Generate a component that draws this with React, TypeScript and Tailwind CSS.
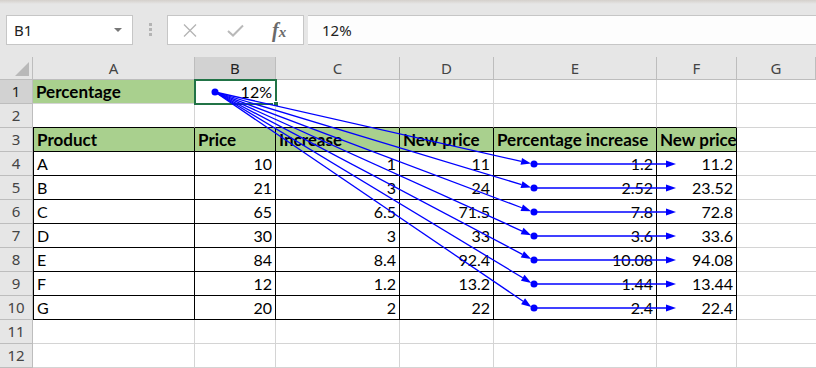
import React from "react";

const cols = ["A", "B", "C", "D", "E", "F", "G"];

const rows: [string, string, string, string, string, string][] = [
  ["A", "10", "1", "11", "1.2", "11.2"],
  ["B", "21", "3", "24", "2.52", "23.52"],
  ["C", "65", "6.5", "71.5", "7.8", "72.8"],
  ["D", "30", "3", "33", "3.6", "33.6"],
  ["E", "84", "8.4", "92.4", "10.08", "94.08"],
  ["F", "12", "1.2", "13.2", "1.44", "13.44"],
  ["G", "20", "2", "22", "2.4", "22.4"],
];

const headers = ["Product", "Price", "Increase", "New price", "Percentage increase", "New price"];

const cellFont = { fontFamily: "Lato, 'Open Sans', sans-serif" };
const uiFont = { fontFamily: "'Noto Sans', 'Open Sans', sans-serif" };

function Arrow({ x1, y1, x2, y2 }: { x1: number; y1: number; x2: number; y2: number }) {
  const dx = x2 - x1;
  const dy = y2 - y1;
  const len = Math.hypot(dx, dy);
  const ux = dx / len;
  const uy = dy / len;
  const tx = x2 - ux * 2;
  const ty = y2 - uy * 2;
  const bx = tx - ux * 10;
  const by = ty - uy * 10;
  const px = -uy * 3.5;
  const py = ux * 3.5;
  return (
    <g>
      <line x1={x1} y1={y1} x2={bx} y2={by} stroke="#0000ff" strokeWidth={1.3} />
      <polygon points={`${tx},${ty} ${bx + px},${by + py} ${bx - px},${by - py}`} fill="#0000ff" />
    </g>
  );
}

function Cell({
  children,
  className = "",
}: {
  children?: React.ReactNode;
  className?: string;
}) {
  return (
    <div
      className={`flex items-end pb-[1px] px-[3px] text-[16px] leading-[20px] text-black border-r border-b whitespace-nowrap ${className}`}
    >
      {children}
    </div>
  );
}

function RowHead({ n, active = false }: { n: number; active?: boolean }) {
  return (
    <div
      className={`flex items-center justify-center border-r border-b border-[#bdbdbd] text-[15px] ${active ? "bg-[#d2d2d2] text-[#222]" : "bg-[#e6e6e6] text-[#444]"}`}
      style={uiFont}
    >
      {n}
    </div>
  );
}

export default function App() {
  const ys = [164, 188, 212, 236, 260, 284, 308];

  return (
    <div className="relative w-[816px] h-[368px] overflow-hidden bg-white">
      {/* Formula bar */}
      <div className="relative h-[57px] bg-[#e6e6e6]" style={uiFont}>
        <div className="h-[4px] bg-gradient-to-b from-[#d4d0cb] to-[#e6e6e6]" />
        <div className="flex items-start pt-[11px]">
          <div className="ml-[6px] w-[127px] h-[30px] bg-white border border-[#c6c6c6] flex items-center justify-between pl-[7px] pr-[10px]">
            <span className="text-[15px] text-[#222]">B1</span>
            <span className="w-0 h-0 border-l-[4px] border-r-[4px] border-t-[4px] border-l-transparent border-r-transparent border-t-[#777]" />
          </div>
          <div className="ml-[16px] mt-[8px] flex flex-col gap-[2px]">
            <span className="w-[3px] h-[3px] bg-[#b4b4b4]" />
            <span className="w-[3px] h-[3px] bg-[#b4b4b4]" />
            <span className="w-[3px] h-[3px] bg-[#b4b4b4]" />
          </div>
          <div className="ml-[15px] w-[137px] h-[30px] bg-white border border-[#c6c6c6] flex items-center">
            <svg width="14" height="13" viewBox="0 0 14 13" className="ml-[15px]">
              <path d="M1 0.5 L13 12.5 M13 0.5 L1 12.5" stroke="#b4b4b4" strokeWidth="1.3" />
            </svg>
            <svg width="17" height="13" viewBox="0 0 17 13" className="ml-[30px]">
              <path d="M1 7 L6 11.5 L16 1.5" stroke="#b9b9b9" strokeWidth="2" fill="none" />
            </svg>
            <span
              className="ml-[28px] text-[20px] leading-none font-bold italic text-[#6a6a6a]"
              style={{ fontFamily: "'Liberation Serif', serif" }}
            >
              f<span className="text-[15px]">x</span>
            </span>
          </div>
          <div className="ml-[4px] flex-1 h-[30px] bg-[#fdfdfd] border-y border-[#c6c6c6] flex items-center pl-[14px]">
            <span className="text-[15px] text-[#222]">12%</span>
          </div>
        </div>
      </div>

      {/* Sheet grid */}
      <div
        className="grid grid-cols-[33px_162px_81px_124px_94px_163px_80px_1fr] grid-rows-[23px_repeat(12,24px)]"
        style={cellFont}
      >
        {/* column headers */}
        <div className="relative bg-[#e6e6e6] border-r border-b border-[#bdbdbd]">
          <span className="absolute right-[3px] bottom-[3px] w-0 h-0 border-l-[14px] border-b-[14px] border-l-transparent border-b-[#b9b9b9]" />
        </div>
        {cols.map((c) => (
          <div
            key={c}
            className={`flex items-center justify-center border-r border-b border-[#bdbdbd] text-[15px] ${c === "B" ? "bg-[#d2d2d2] text-[#222]" : "bg-[#e6e6e6] text-[#444]"}`}
            style={uiFont}
          >
            {c}
          </div>
        ))}

        {/* row 1 */}
        <RowHead n={1} active />
        <Cell className="bg-[#a9d08e] border-[#d4d4d4] font-bold text-[17px]">Percentage</Cell>
        <Cell className="justify-end border-[#d4d4d4]">12%</Cell>
        <Cell className="border-[#d4d4d4]" />
        <Cell className="border-[#d4d4d4]" />
        <Cell className="border-[#d4d4d4]" />
        <Cell className="border-[#d4d4d4]" />
        <Cell className="border-[#d4d4d4] border-r-0" />

        {/* row 2 */}
        <RowHead n={2} />
        {[0, 1, 2, 3, 4, 5].map((i) => (
          <Cell key={i} className="border-r-[#d4d4d4] border-b-black" />
        ))}
        <Cell className="border-[#d4d4d4] border-r-0" />

        {/* row 3 headers */}
        <RowHead n={3} />
        {headers.map((h, i) => (
          <Cell key={i} className={`bg-[#a9d08e] border-black font-bold text-[17px] ${i === 0 ? "border-l" : ""}`}>
            {h}
          </Cell>
        ))}
        <Cell className="border-[#d4d4d4] border-r-0" />

        {/* data rows */}
        {rows.map((r, ri) => (
          <React.Fragment key={ri}>
            <RowHead n={ri + 4} />
            {r.map((v, i) => (
              <Cell key={i} className={`border-black ${i === 0 ? "border-l" : "justify-end"}`}>
                {v}
              </Cell>
            ))}
            <Cell className="border-[#d4d4d4] border-r-0" />
          </React.Fragment>
        ))}

        {/* rows 11-12 */}
        {[11, 12].map((n) => (
          <React.Fragment key={n}>
            <RowHead n={n} />
            {[0, 1, 2, 3, 4, 5].map((i) => (
              <Cell key={i} className="border-[#d4d4d4]" />
            ))}
            <Cell className="border-[#d4d4d4] border-r-0" />
          </React.Fragment>
        ))}
      </div>

      {/* selected cell B1 */}
      <div className="absolute left-[194px] top-[79px] w-[83px] h-[26px] border-2 border-[#217346] pointer-events-none" />
      <div className="absolute left-[273px] top-[101px] w-[6px] h-[6px] bg-[#217346] border border-white pointer-events-none" />

      {/* trace arrows */}
      <svg className="absolute left-0 top-0 pointer-events-none" width="816" height="368">
        <circle cx={215} cy={92} r={3.5} fill="#0000ff" />
        {ys.map((y) => (
          <g key={y}>
            <Arrow x1={215} y1={92} x2={533} y2={y} />
            <circle cx={534} cy={y} r={3.5} fill="#0000ff" />
            <Arrow x1={534} y1={y} x2={678} y2={y} />
          </g>
        ))}
      </svg>
    </div>
  );
}
